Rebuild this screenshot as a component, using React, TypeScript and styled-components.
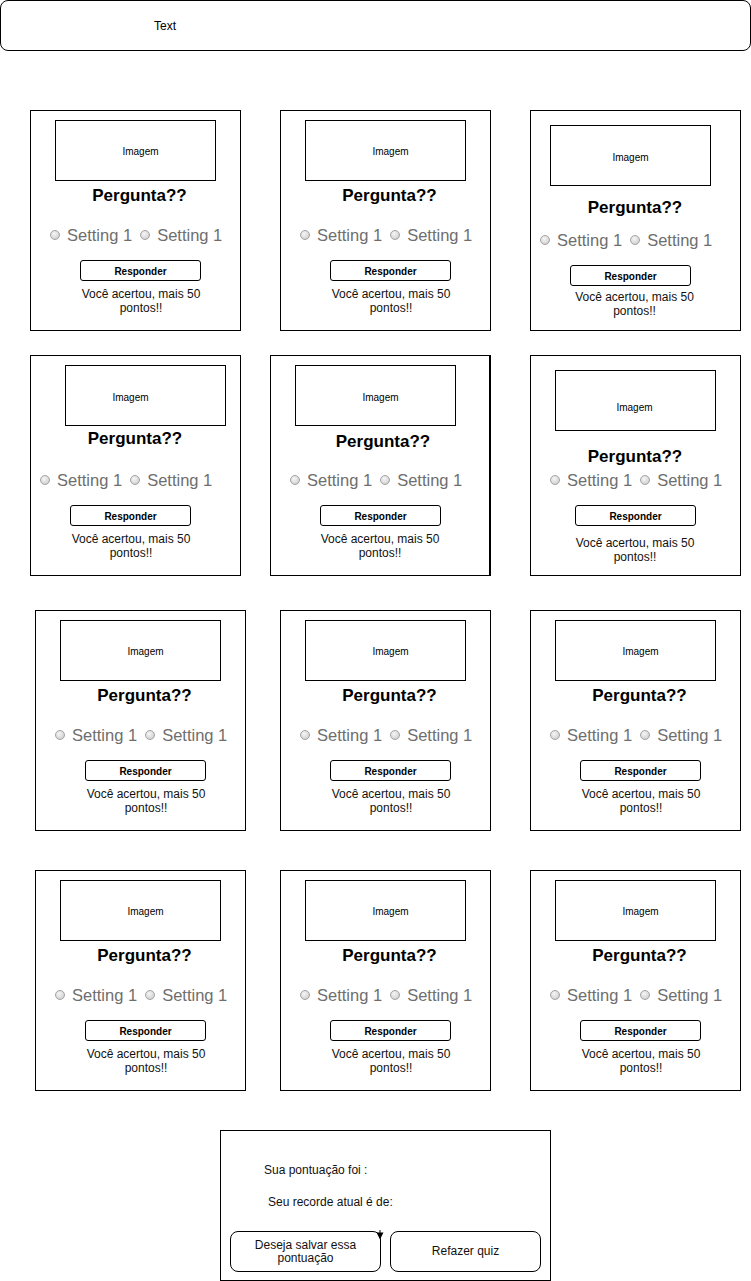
import React from "react";
import styled, { createGlobalStyle } from "styled-components";

const GlobalStyle = createGlobalStyle`
  html, body { margin: 0; padding: 0; background: #fff; }
  body { font-family: "Liberation Sans", Arial, Helvetica, sans-serif; color: #000; }
  * { box-sizing: border-box; }
`;

const Page = styled.div`
  width: 751px;
  height: 1281px;
  display: flex;
  flex-direction: column;
  overflow: hidden;
`;

const TopBar = styled.header`
  width: 751px;
  height: 51px;
  flex-shrink: 0;
  border: 1px solid #000;
  border-radius: 8px;
  display: flex;
  align-items: center;
  padding-left: 153px;
  font-size: 12px;
`;

const CardRow = styled.div<{ $mt: number }>`
  display: flex;
  margin-top: ${(p) => p.$mt}px;
  flex-shrink: 0;
`;

const Card = styled.section<{ $ml: number; $wide?: boolean }>`
  margin-left: ${(p) => p.$ml}px;
  width: ${(p) => (p.$wide ? 221 : 211)}px;
  height: 221px;
  flex-shrink: 0;
  border: 1px solid #000;
  border-right-width: ${(p) => (p.$wide ? 2 : 1)}px;
  display: flex;
  flex-direction: column;
  align-items: flex-start;
`;

type Offset = { $mt: number; $ml: number };

const ImageBox = styled.div<Offset & { $dx: number; $dy: number }>`
  margin: ${(p) => p.$mt}px 0 0 ${(p) => p.$ml}px;
  width: 161px;
  height: 61px;
  flex-shrink: 0;
  border: 1px solid #000;
  display: flex;
  align-items: center;
  justify-content: center;
  font-size: 10px;
  padding-left: ${(p) => Math.max(0, 2 * p.$dx)}px;
  padding-right: ${(p) => Math.max(0, -2 * p.$dx)}px;
  padding-top: ${(p) => Math.max(0, 2 * p.$dy)}px;
  padding-bottom: ${(p) => Math.max(0, -2 * p.$dy)}px;
`;

const Question = styled.h2<Offset>`
  margin: ${(p) => p.$mt}px 0 0 ${(p) => p.$ml}px;
  width: 140px;
  height: 20px;
  flex-shrink: 0;
  line-height: 20px;
  font-size: 17px;
  font-weight: bold;
  text-align: center;
  white-space: nowrap;
`;

const RadioRow = styled.div<Offset>`
  margin: ${(p) => p.$mt}px 0 0 ${(p) => p.$ml}px;
  height: 20px;
  flex-shrink: 0;
  display: flex;
  align-items: center;
  gap: 8px;
`;

const RadioItem = styled.label`
  display: flex;
  align-items: center;
  gap: 7px;
  font-size: 16.5px;
  line-height: 20px;
  color: #6e6e6e;
  white-space: nowrap;
`;

const RadioDot = styled.span`
  width: 10px;
  height: 10px;
  border-radius: 50%;
  border: 1px solid #a3a3a3;
  background: radial-gradient(circle at 40% 35%, #f6f6f6 0%, #dcdcdc 55%, #c4c4c4 100%);
  flex-shrink: 0;
`;

const AnswerButton = styled.button<Offset>`
  margin: ${(p) => p.$mt}px 0 0 ${(p) => p.$ml}px;
  width: 121px;
  height: 21px;
  flex-shrink: 0;
  padding: 2px 0 0;
  border: 1px solid #000;
  border-radius: 3px;
  background: #fff;
  font-family: inherit;
  font-size: 10px;
  font-weight: bold;
  color: #000;
`;

const Feedback = styled.p<Offset>`
  margin: ${(p) => p.$mt}px 0 0 ${(p) => p.$ml}px;
  width: 140px;
  flex-shrink: 0;
  font-size: 12px;
  line-height: 14px;
  text-align: center;
  color: #111;
`;

const ScorePanel = styled.section`
  position: relative;
  margin: 39px 0 0 220px;
  width: 331px;
  height: 151px;
  flex-shrink: 0;
  border: 1px solid #000;
  display: flex;
  flex-direction: column;
  align-items: flex-start;
`;

const ScoreLine = styled.p<Offset>`
  margin: ${(p) => p.$mt}px 0 0 ${(p) => p.$ml}px;
  height: 14px;
  line-height: 14px;
  font-size: 12px;
  color: #111;
`;

const PanelActions = styled.div`
  margin: 22px 0 0 9px;
  display: flex;
  gap: 9px;
`;

const PanelButton = styled.button`
  width: 151px;
  height: 41px;
  padding: 0 14px;
  border: 1px solid #000;
  border-radius: 8px;
  background: #fff;
  font-family: inherit;
  font-size: 12px;
  line-height: 13px;
  color: #111;
`;

const ConnectorArrow = styled.svg`
  position: absolute;
  left: 155px;
  top: 99px;
  width: 8px;
  height: 10px;
`;

type Layout = {
  img: [number, number, number, number];
  q: [number, number];
  r: [number, number];
  b: [number, number];
  t: [number, number];
};

const STD: Layout = { img: [25, 10, 5, 1], q: [109.5, 86], r: [20, 125], b: [50, 150], t: [111, 183.5] };
const R1C3: Layout = { img: [20, 15, 0, 2], q: [105, 97.5], r: [10, 130], b: [40, 155], t: [104.5, 187] };
const R2C1: Layout = { img: [35, 10, -15, 2], q: [105, 83.5], r: [10, 125], b: [40, 150], t: [101, 184] };
const R2C2: Layout = { img: [25, 10, 5, 2], q: [113, 86.5], r: [20, 125], b: [50, 150], t: [110, 184] };
const R2C3: Layout = { img: [25, 15, -1, 7], q: [105, 102], r: [20, 125], b: [45, 150], t: [105, 187.5] };

function QuizCard({ ml, layout, wide }: { ml: number; layout: Layout; wide?: boolean }) {
  const els = [
    { left: layout.img[0], top: layout.img[1], h: 61 },
    { left: layout.q[0] - 70, top: layout.q[1] - 10, h: 20 },
    { left: layout.r[0], top: layout.r[1] - 10, h: 20 },
    { left: layout.b[0], top: layout.b[1], h: 21 },
    { left: layout.t[0] - 70, top: layout.t[1] - 7, h: 28 },
  ];
  let prev = 1;
  const off = els.map((e) => {
    const o = { $mt: e.top - prev, $ml: e.left - 1 };
    prev = e.top + e.h;
    return o;
  });
  return (
    <Card $ml={ml} $wide={wide}>
      <ImageBox {...off[0]} $dx={layout.img[2]} $dy={layout.img[3]}>
        Imagem
      </ImageBox>
      <Question {...off[1]}>Pergunta??</Question>
      <RadioRow {...off[2]}>
        <RadioItem>
          <RadioDot />
          Setting 1
        </RadioItem>
        <RadioItem>
          <RadioDot />
          Setting 1
        </RadioItem>
      </RadioRow>
      <AnswerButton {...off[3]}>Responder</AnswerButton>
      <Feedback {...off[4]}>Você acertou, mais 50 pontos!!</Feedback>
    </Card>
  );
}

export default function App() {
  return (
    <>
      <GlobalStyle />
      <Page>
        <TopBar>Text</TopBar>
        <CardRow $mt={59}>
          <QuizCard ml={30} layout={STD} />
          <QuizCard ml={39} layout={STD} />
          <QuizCard ml={39} layout={R1C3} />
        </CardRow>
        <CardRow $mt={24}>
          <QuizCard ml={30} layout={R2C1} />
          <QuizCard ml={29} layout={R2C2} wide />
          <QuizCard ml={39} layout={R2C3} />
        </CardRow>
        <CardRow $mt={34}>
          <QuizCard ml={35} layout={STD} />
          <QuizCard ml={34} layout={STD} />
          <QuizCard ml={39} layout={STD} />
        </CardRow>
        <CardRow $mt={39}>
          <QuizCard ml={35} layout={STD} />
          <QuizCard ml={34} layout={STD} />
          <QuizCard ml={39} layout={STD} />
        </CardRow>
        <ScorePanel>
          <ScoreLine $mt={32} $ml={43}>Sua pontuação foi :</ScoreLine>
          <ScoreLine $mt={18} $ml={47}>Seu recorde atual é de:</ScoreLine>
          <PanelActions>
            <PanelButton>Deseja salvar essa pontuação</PanelButton>
            <PanelButton>Refazer quiz</PanelButton>
          </PanelActions>
          <ConnectorArrow viewBox="0 0 8 10">
            <line x1="4" y1="0" x2="4" y2="3" stroke="#000" strokeWidth="1" />
            <polygon points="0.5,2.5 7.5,2.5 4,9.5" fill="#000" />
          </ConnectorArrow>
        </ScorePanel>
      </Page>
    </>
  );
}
